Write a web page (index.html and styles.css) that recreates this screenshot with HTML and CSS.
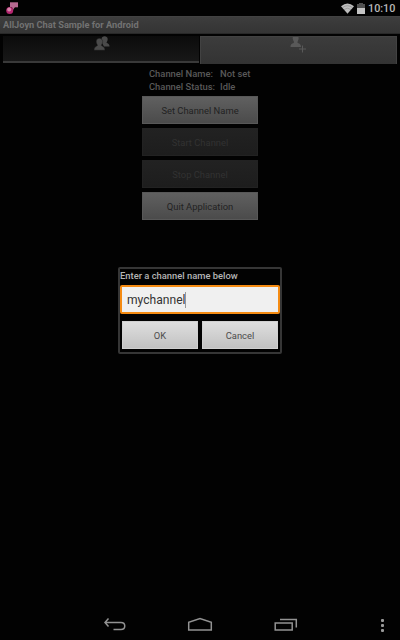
FILE: index.html
```html
<!DOCTYPE html>
<html lang="en">
<head>
<meta charset="utf-8">
<title>AllJoyn Chat Sample for Android</title>
<link rel="stylesheet" href="styles.css">
</head>
<body>
<div class="screen">
  <header class="status-bar">
    <svg class="notification" width="14" height="14" viewBox="0 0 14 14">
      <rect x="4" y="0.3" width="8" height="5" fill="#b66a91"/>
      <path d="M6 5h3L7 8z" fill="#b66a91"/>
      <circle cx="3.700" cy="8.600" r="3.500" fill="#b52670"/>
      <circle cx="3.200" cy="7.500" r="2" fill="#d586aa"/>
    </svg>
    <div class="system">
      <svg width="13" height="11" viewBox="0 0 13 11">
        <path d="M0 3.2Q6.5-2.300 13 3.200L6.500 10.800Z" fill="#bdbdbd"/>
        <path d="M1.400 4.700Q6.500.7 11.600 4.700M3 6.600Q6.500 3.800 10 6.600" fill="none" stroke="#777" stroke-width=".5"/>
      </svg>
      <svg width="8" height="11" viewBox="0 0 8 11">
        <path d="M2 0h4v1h2v10H0V1h2z" fill="#505050"/>
        <path d="M0 5h8v6H0z" fill="#c4c4c4"/>
      </svg>
      <span class="clock">10:10</span>
    </div>
  </header>
  <div class="title-bar">AllJoyn Chat Sample for Android</div>
  <nav class="tabs">
    <div class="tab tab-users">
      <svg width="16" height="15" viewBox="0 0 16 15" fill="#4a4a4a">
        <path d="M7.500 3C7.500-.8 13.700-.8 13.700 3c0 2-.9 2.500-1.200 3.700 1.200.9 3 1 3 3.800H10L7.500 6z"/>
        <path d="M2.200 5.500c0-4.300 6.400-4.300 6.400 0 0 2-.9 2.700-1.200 4 1.300 1 3.600 1.200 3.600 4.700H0c0-3.500 2.200-3.700 3.500-4.700-.4-1.300-1.300-2-1.300-4z" stroke="#141414" stroke-width=".4"/>
      </svg>
    </div>
    <div class="tab tab-add">
      <svg width="16" height="17" viewBox="0 0 16 17">
        <path d="M2.800 0h5.700c.6 2.500-.7 3.500-1.200 5.500 1.200 1 3.700 1 3.700 4.500H.5C.5 6.500 3 6.500 4.200 5.500 3.700 3.500 2.200 2.500 2.800 0z" fill="#595959"/>
        <path d="M12.500 8.500v7M9 12h7" stroke="#595959"/>
      </svg>
    </div>
  </nav>
  <main class="content">
    <dl class="channel-info">
      <dt>Channel Name:</dt><dd>Not set</dd>
      <dt>Channel Status:</dt><dd>Idle</dd>
    </dl>
    <div class="actions">
      <button class="action">Set Channel Name</button>
      <button class="action" disabled>Start Channel</button>
      <button class="action" disabled>Stop Channel</button>
      <button class="action">Quit Application</button>
    </div>
  </main>
  <section class="dialog">
    <div class="prompt">Enter a channel name below</div>
    <div class="field">mychannel<span class="caret"></span></div>
    <div class="choices">
      <button class="choice">OK</button>
      <button class="choice">Cancel</button>
    </div>
  </section>
  <footer class="nav-bar">
    <svg width="24" height="14" viewBox="0 0 24 14"><path d="M5.500 1.500L2 5.500l3.500 4M2 5.500H18c5 0 5 7 0 7h-7.500" /></svg>
    <svg width="26" height="15" viewBox="0 0 26 15"><path d="M1.700 13V5.300L13 1.500l11.300 3.800V13z"/></svg>
    <svg width="24" height="15" viewBox="0 0 24 15"><path d="M1.200 6h17v7h-17zM6 2.500h16.300v8"/></svg>
    <div class="overflow"><i></i><i></i><i></i></div>
  </footer>
</div>
</body>
</html>
```

FILE: styles.css
```css
* { box-sizing: border-box; }
body { margin: 0; background: #000; font-family: Roboto, sans-serif; }
button { font-family: inherit; border: 0; padding: 0; }
svg { display: block; }

.screen {
  position: relative;
  width: 400px;
  height: 640px;
  display: flex;
  flex-direction: column;
  background: #020202;
  overflow: hidden;
}
.status-bar {
  height: 16px;
  padding: 2px 4px 0 6px;
  display: flex;
  justify-content: space-between;
}
.system { display: flex; gap: 3px; padding-top: 1px; }
.clock { margin-left: 0; width: 27.500px; font-size: 10.800px; font-weight: 500; line-height: 12px; color: #b8b8b8; white-space: nowrap; }
.system { margin-right: 0.500px; }
.title-bar {
  height: 18px;
  padding-left: 3px;
  background: linear-gradient(#3d3d3d, #343434);
  border-top: 1px solid #424242;
  border-bottom: 1px solid #282828;
  color: #727272;
  font-size: 9.250px;
  font-weight: 700;
  line-height: 16px;
}
.tabs { display: flex; gap: 1px; height: 30px; padding: 2px 3px 0 3px; }
.tab { display: flex; justify-content: center; }
.tab-users { width: 196px; height: 27px; background: linear-gradient(#0b0b0b, #181818); border-bottom: 2px solid #393939; }
.tab-users svg { margin-left: 1px; }
.tab-add { width: 197px; height: 28px; background: linear-gradient(#3c3c3c, #333); border: 1px solid #424242; border-width: 1px 1px 0 1px; }
.tab-add svg { margin-right: 2px; }
.content { padding-top: 3px; display: flex; flex-direction: column; align-items: center; }
.channel-info {
  margin: 0;
  width: 102px;
  display: grid;
  grid-template-columns: 71px 31px;
  grid-auto-rows: 13px;
  font-size: 9.400px;
  font-weight: 500;
  line-height: 13px;
  color: #595959;
  white-space: nowrap;
}
.channel-info dd { margin: 0; }
.actions { width: 116px; margin-top: 3px; display: grid; gap: 4px; }
.action {
  height: 28px;
  background: linear-gradient(#606060, #4b4b4b);
  border: 1px solid #585858;
  color: #222;
  font-size: 9.400px;
}
.action:disabled { background: linear-gradient(#222, #1d1d1d); border-color: #222; color: #323232; }
.dialog {
  position: absolute;
  left: 118px;
  top: 267px;
  width: 164px;
  height: 87px;
  border: 2px solid #363636;
  border-radius: 2px;
  background: #020202;
}
.prompt { height: 16px; font-size: 9.400px; font-weight: 500; line-height: 14px; color: #b5b5b5; white-space: nowrap; }
.field {
  display: flex;
  align-items: center;
  height: 29px;
  padding-left: 5px;
  border: 2px solid #f58b12;
  border-radius: 2px;
  background: #f0f0f0;
  color: #333;
  font-size: 12.100px;
}
.caret { width: 1px; height: 16px; margin-left: -0.500px; background: #999; }
.choices { display: grid; grid-template-columns: 76px 76px; gap: 4px; padding: 7px 2px 0; }
.choice {
  height: 28px;
  background: linear-gradient(#dedede, #c2c2c2);
  border: 1px solid #d0d0d0;
  color: #4c4c4c;
  font-size: 9.400px;
}
.nav-bar {
  margin-top: auto;
  height: 23px;
  display: grid;
  grid-template-columns: 84px 87px 103px 10px;
  padding-left: 103px;
  align-items: start;
}
.nav-bar svg { fill: none; stroke: #929292; stroke-width: 1.500; }
.overflow { display: grid; gap: 2px; padding: 2px 0 0 4px; }
.overflow i { width: 3px; height: 3px; border-radius: 1px; background: #999; }
```
